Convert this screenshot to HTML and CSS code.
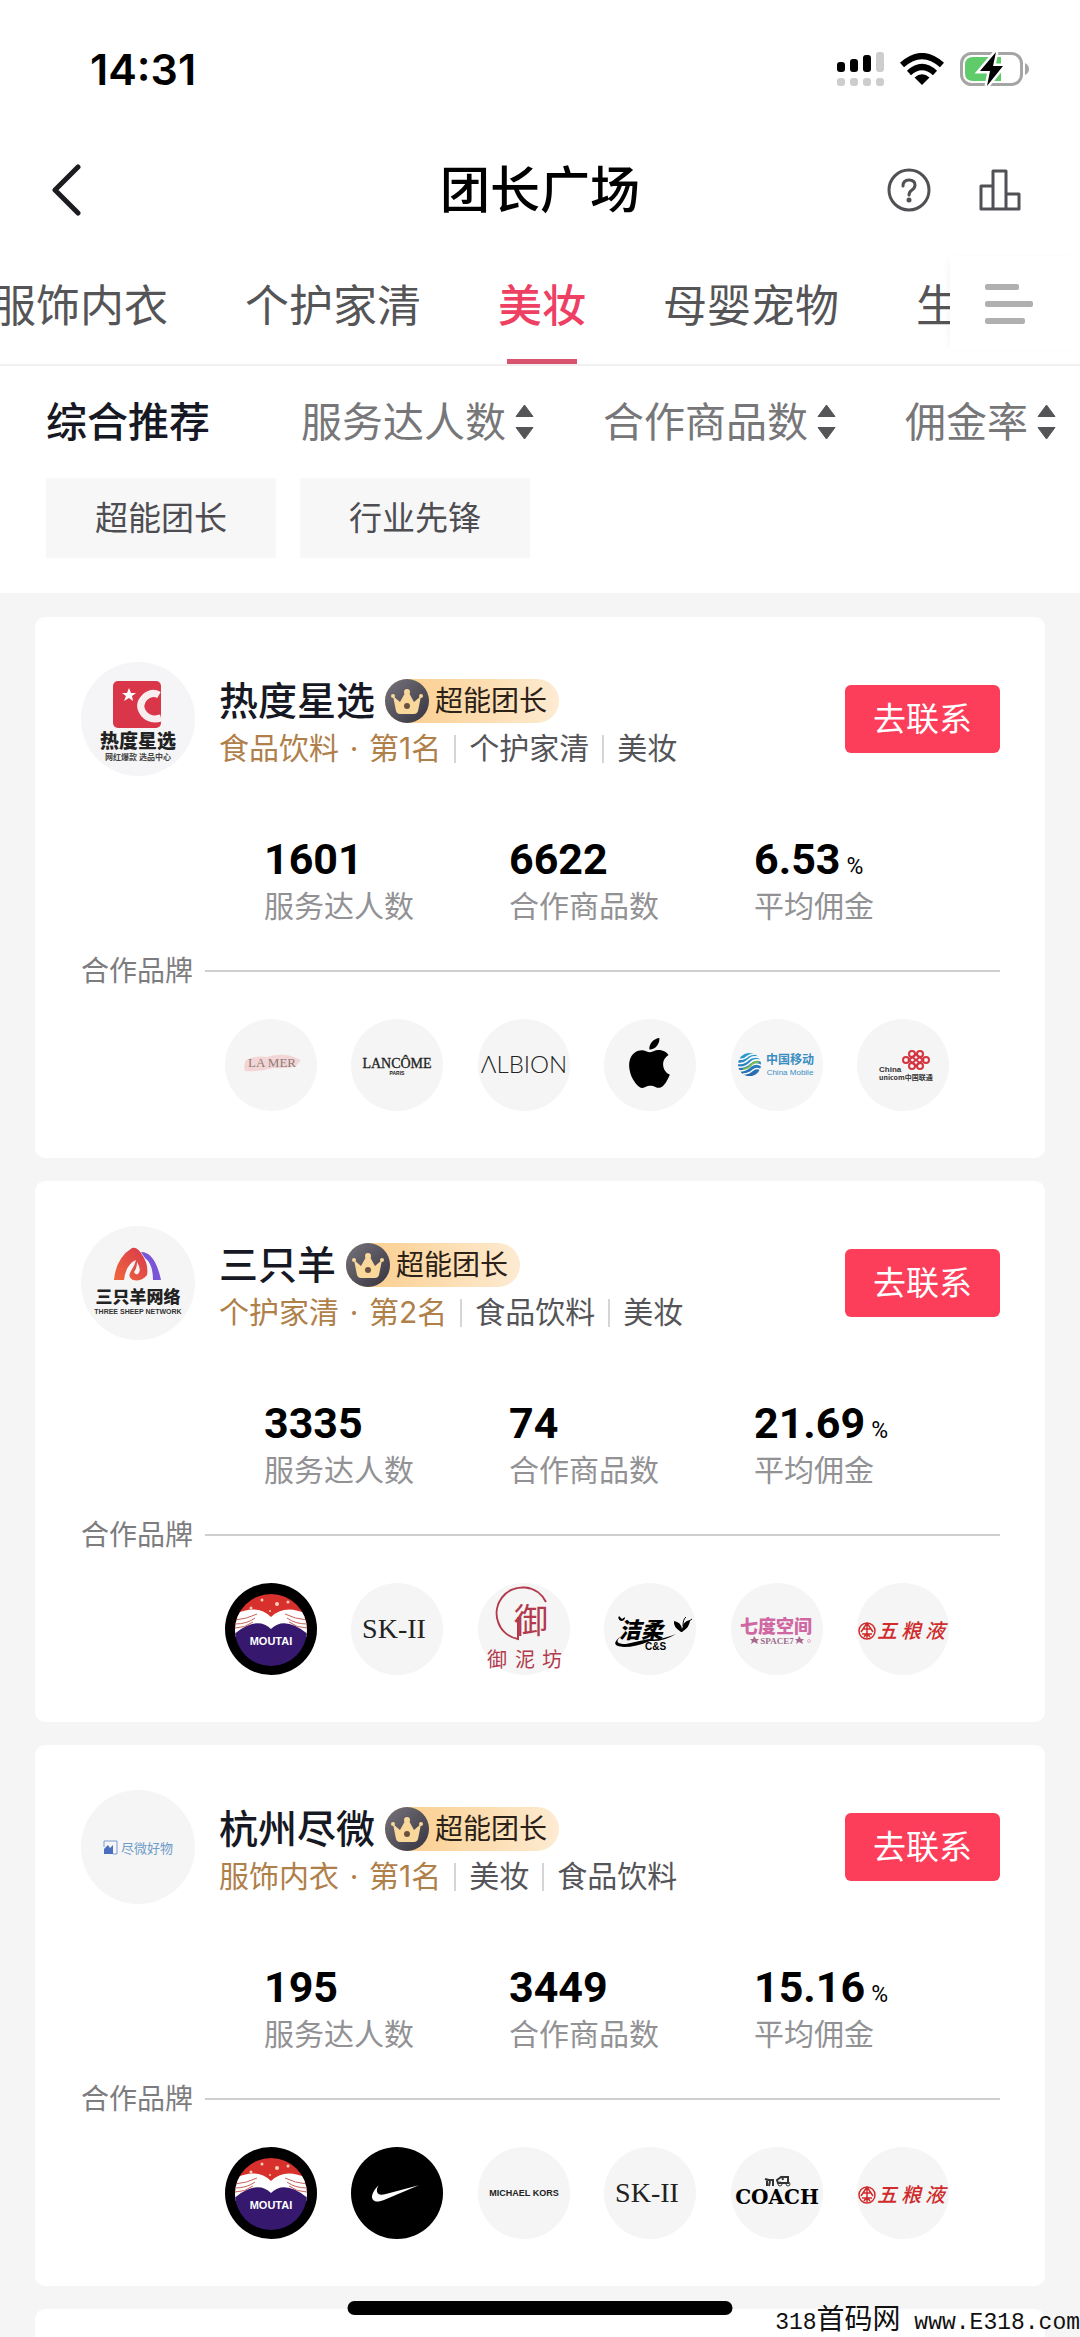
FILE: index.html
```html
<!DOCTYPE html>
<html lang="zh-CN">
  <head>
    <meta charset="utf-8">
    <meta name="viewport" content="width=device-width, initial-scale=1">
    <title>团长广场</title>
    <link rel="stylesheet" href="styles.css">
  </head>
  <body>
    <!-- shared icons and gradients -->
    <svg class="sprite" aria-hidden="true">
      <defs>
        <linearGradient id="crown-bg" x1="0" y1="0" x2="1" y2="1">
          <stop offset="0" stop-color="#77747c"/>
          <stop offset="1" stop-color="#35333f"/>
        </linearGradient>
        <linearGradient id="sheep-left" x1="0" y1="1" x2="1" y2="0">
          <stop offset="0" stop-color="#f0683a"/>
          <stop offset="1" stop-color="#d8384f"/>
        </linearGradient>
        <linearGradient id="mobile-bg" x1="0" y1="0" x2="0" y2="1">
          <stop offset="0" stop-color="#2f9fd0"/>
          <stop offset="1" stop-color="#2565b0"/>
        </linearGradient>
      </defs>
      <symbol id="crown" viewBox="0 0 44 44">
        <circle cx="22" cy="22" r="22" fill="url(#crown-bg)"/>
        <path d="M8 17L15 23L20 14H24L29 23L36 17L33 32Q32 35 29 35H15Q12 35 11 32Z" fill="#fad79b"/>
        <circle cx="8" cy="17" r="2" fill="#fad79b"/>
        <circle cx="22" cy="13" r="3" fill="#fad79b"/>
        <circle cx="36" cy="17" r="2" fill="#fad79b"/>
        <circle cx="22" cy="27" r="3" fill="#6a5240"/>
      </symbol>
      <symbol id="sort" viewBox="0 0 19 34">
        <path d="M9.500 0L18 11.500H1Z M9.500 34L18 22.500H1Z" fill="#555558" stroke="#555558" stroke-linejoin="round"/>
      </symbol>
    </svg>

    <div class="app">
      <div class="statusbar">
        <time class="clock">14:31</time>
        <div class="indicators">
          <svg width="47" height="34" viewBox="0 0 47 34" aria-label="信号">
            <g fill="#000">
              <rect x="0" y="10" width="8" height="10" rx="3"/>
              <rect x="13" y="7" width="8" height="13" rx="3"/>
              <rect x="26" y="3" width="8" height="17" rx="3"/>
            </g>
            <g fill="#cdcdcd">
              <rect x="39" y="0" width="8" height="20" rx="3"/>
              <rect x="0" y="26" width="8" height="8" rx="3"/>
              <rect x="13" y="26" width="8" height="8" rx="3"/>
              <rect x="26" y="26" width="8" height="8" rx="3"/>
              <rect x="39" y="26" width="8" height="8" rx="3"/>
            </g>
          </svg>
          <svg width="44" height="32" viewBox="0 0 44 32" aria-label="无线网络">
            <g fill="none" stroke="#000" stroke-width="6">
              <path d="M2 12Q22 -6 42 12"/>
              <path d="M9 20Q22 8 35 20"/>
            </g>
            <path d="M22 32L14.500 24.500Q22 18 29.500 24.500Z"/>
          </svg>
          <svg width="70" height="36" viewBox="0 0 70 36" aria-label="电池充电中">
            <rect x="1.500" y="2.500" width="60" height="31" rx="10" fill="#fff" stroke="#a5a5a5" stroke-width="3"/>
            <path d="M13 6H41V30H13Q5 30 5 22V14Q5 6 13 6Z" fill="#5fcb6b"/>
            <path d="M65 12Q69 14 69 18Q69 22 65 24Z" fill="#a5a5a5"/>
            <path d="M36 1L20 20H30L27 35L43 15H33Z" stroke="#fff" stroke-width="5"/>
            <path d="M36 1L20 20H30L27 35L43 15H33Z"/>
          </svg>
        </div>
      </div>

      <header class="header">
        <button class="icon-button" aria-label="返回">
          <svg width="30" height="52" viewBox="0 0 30 52"><path d="M27 3L4 26L27 49" fill="none" stroke="#1c1c20" stroke-width="5" stroke-linecap="round" stroke-linejoin="round"/></svg>
        </button>
        <h1>团长广场</h1>
        <div class="actions">
          <button class="icon-button" aria-label="帮助">
            <svg width="44" height="44" viewBox="0 0 44 44" fill="none" stroke="#505055" stroke-width="3">
              <circle cx="22" cy="22" r="20"/>
              <path d="M16 18Q16 12 22 12Q28 12 28 17Q28 20 25 22Q22 24 22 27" stroke-linecap="round"/>
              <circle cx="22" cy="32" r="2.500" fill="#505055" stroke="none"/>
            </svg>
          </button>
          <button class="icon-button" aria-label="数据">
            <svg width="42" height="42" viewBox="0 0 42 42" fill="none" stroke="#505055" stroke-width="3" stroke-linejoin="round">
              <path d="M2 40V17H14V40ZM14 40V2H27V40ZM27 40V25H40V40Z"/>
            </svg>
          </button>
        </div>
      </header>

      <nav class="tabs">
        <div class="tab-scroll">
          <button class="tab">服饰内衣</button>
          <button class="tab">个护家清</button>
          <button class="tab active">美妆</button>
          <button class="tab">母婴宠物</button>
          <button class="tab">生鲜</button>
        </div>
        <button class="tab-menu" aria-label="全部分类">
          <svg width="48" height="40" viewBox="0 0 48 40" fill="#b0b0b0">
            <rect y="0" width="34" height="6" rx="2"/><rect y="17" width="48" height="6" rx="2"/><rect y="34" width="40" height="6" rx="2"/>
          </svg>
        </button>
      </nav>

      <div class="filters">
        <div class="sorts">
          <button class="sort active">综合推荐</button>
          <button class="sort">服务达人数<svg width="19" height="34"><use href="#sort"/></svg></button>
          <button class="sort">合作商品数<svg width="19" height="34"><use href="#sort"/></svg></button>
          <button class="sort">佣金率<svg width="19" height="34"><use href="#sort"/></svg></button>
        </div>
        <div class="chips">
          <button class="chip">超能团长</button>
          <button class="chip">行业先锋</button>
        </div>
      </div>

      <main class="list">
        <article class="card">
          <div class="head">
            <svg class="avatar" viewBox="0 0 114 114" aria-label="热度星选">
              <circle cx="57" cy="57" r="57" fill="#f5f4f6"/>
              <rect x="32" y="19" width="48" height="47" rx="5" fill="#d9364a"/>
              <path d="M48 26L50 31L55 31L51 34L52 39L48 36L43 39L45 34L41 31L46 31Z" fill="#fff"/>
              <path d="M78 33Q71 29 64 35Q56 43 63 52Q69 59 80 56" fill="none" stroke="#f8eef0" stroke-width="7"/>
              <text class="cjk black" x="57" y="86" font-size="19" fill="#222" text-anchor="middle">热度星选</text>
              <text class="cjk bold" x="57" y="98" font-size="8" fill="#444" text-anchor="middle">网红爆款 选品中心</text>
            </svg>
            <div class="info">
              <div class="title">
                <h2>热度星选</h2>
                <span class="badge"><svg width="44" height="44"><use href="#crown"/></svg>超能团长</span>
              </div>
              <div class="tags"><span class="rank">食品饮料<i>·</i>第1名</span><span>个护家清</span><span>美妆</span></div>
            </div>
            <button class="contact">去联系</button>
          </div>
          <dl class="stats">
            <div><dt>服务达人数</dt><dd>1601</dd></div>
            <div><dt>合作商品数</dt><dd>6622</dd></div>
            <div><dt>平均佣金</dt><dd>6.53<small>%</small></dd></div>
          </dl>
          <h3 class="divider">合作品牌</h3>
          <div class="brands">
            <svg viewBox="0 0 92 92">
              <circle cx="46" cy="46" r="46" fill="#f5f5f5"/>
              <path d="M21 41Q30 36 42 38Q55 34 66 37L76 41L71 47Q60 50 48 49Q36 53 20 52Q18 46 21 41Z" fill="#f4d5d6"/>
              <text class="serif" x="47" y="48" font-size="13" fill="#8b7d76" text-anchor="middle">LA MER</text>
            </svg>
            <svg viewBox="0 0 92 92">
              <circle cx="46" cy="46" r="46" fill="#f5f5f5"/>
              <text class="serif" x="46" y="49" font-size="14" fill="#222" stroke="#222" stroke-width=".3" text-anchor="middle">LANCÔME</text>
              <text class="sans bold" x="46" y="56" font-size="5" fill="#222" text-anchor="middle">PARIS</text>
            </svg>
            <svg viewBox="0 0 92 92">
              <circle cx="46" cy="46" r="46" fill="#f5f5f5"/>
              <text class="lato" x="46" y="54" font-size="24" fill="#222" text-anchor="middle">ΛLBION</text>
            </svg>
            <svg viewBox="0 0 92 92">
              <circle cx="46" cy="46" r="46" fill="#f5f5f5"/>
              <path transform="translate(20.500 19) scale(2.080)" d="M12.152 6.896c-.948 0-2.415-1.078-3.960-1.040-2.040.027-3.910 1.183-4.961 3.014-2.117 3.675-.546 9.103 1.519 12.090 1.013 1.454 2.208 3.090 3.792 3.039 1.520-.065 2.090-.987 3.935-.987 1.831 0 2.350.987 3.960.948 1.637-.026 2.676-1.480 3.676-2.948 1.156-1.688 1.636-3.325 1.662-3.415-.039-.013-3.182-1.221-3.220-4.857-.026-3.040 2.480-4.494 2.597-4.559-1.429-2.090-3.623-2.324-4.390-2.376-2-.156-3.675 1.090-4.610 1.090zM15.530 3.830c.843-1.012 1.400-2.427 1.245-3.830-1.207.052-2.662.805-3.532 1.818-.780.896-1.454 2.338-1.273 3.714 1.338.104 2.715-.688 3.559-1.701"/>
            </svg>
            <svg viewBox="0 0 92 92">
              <circle cx="46" cy="46" r="46" fill="#f6f6f7"/>
              <circle cx="18.500" cy="45.500" r="11.500" fill="url(#mobile-bg)"/>
              <g fill="none" stroke="#fff" stroke-width="1.500">
                <path d="M6 44Q12 46 17 41Q22 36 29 39M7 48Q14 49 19 44Q24 39 31 42M8 52Q15 52 20 47Q25 43 31 47M12 55Q18 55 22 51Q26 48 30 51M8 40Q13 41 17 37Q20 35 24 35"/>
              </g>
              <path d="M12 50Q17 50 21 45Q24 42 28 43" fill="none" stroke="#7cc04b" stroke-width="2"/>
              <text class="cjk bold" x="59" y="45" font-size="12" fill="#3c8dbf" text-anchor="middle">中国移动</text>
              <text class="sans" x="59" y="56" font-size="8" fill="#3c8dbf" text-anchor="middle">China Mobile</text>
            </svg>
            <svg viewBox="0 0 92 92">
              <circle cx="46" cy="46" r="46" fill="#f5f5f5"/>
              <g fill="none" stroke="#d3343f" stroke-width="2">
                <circle cx="55" cy="35" r="3"/><circle cx="63" cy="35" r="3"/>
                <circle cx="55" cy="47" r="3"/><circle cx="63" cy="47" r="3"/>
                <circle cx="49" cy="41" r="3"/><circle cx="69" cy="41" r="3"/>
                <path d="M52 41L59 35L66 41L59 47ZM55 38L63 44M63 38L55 44"/>
              </g>
              <text class="sans bold" x="22" y="53" font-size="8" fill="#333">China</text>
              <text class="cjk bold" x="22" y="61" font-size="7" fill="#333">unicom中国联通</text>
            </svg>
          </div>
        </article>

        <article class="card">
          <div class="head">
            <svg class="avatar" viewBox="0 0 114 114" aria-label="三只羊网络">
              <circle cx="57" cy="57" r="57" fill="#f5f5f5"/>
              <path d="M60 26Q74 26 80 54H72Q72 38 64 32Z" fill="#7a55d8"/>
              <path d="M33 54Q35 32 51 22Q56 21 60 27Q68 38 66 49Q61 56 52 54Q46 51 50 45Q54 39 55 34Q45 38 43 54Z" fill="url(#sheep-left)"/>
              <path d="M56 36Q61 44 57 48Q54 49 53 46Q56 42 56 36Z" fill="#f5f5f5"/>
              <text class="cjk black" x="57" y="77" font-size="17" fill="#222" text-anchor="middle">三只羊网络</text>
              <text class="sans bold" x="57" y="88" font-size="7" fill="#333" text-anchor="middle">THREE SHEEP NETWORK</text>
            </svg>
            <div class="info">
              <div class="title">
                <h2>三只羊</h2>
                <span class="badge"><svg width="44" height="44"><use href="#crown"/></svg>超能团长</span>
              </div>
              <div class="tags"><span class="rank">个护家清<i>·</i>第2名</span><span>食品饮料</span><span>美妆</span></div>
            </div>
            <button class="contact">去联系</button>
          </div>
          <dl class="stats">
            <div><dt>服务达人数</dt><dd>3335</dd></div>
            <div><dt>合作商品数</dt><dd>74</dd></div>
            <div><dt>平均佣金</dt><dd>21.69<small>%</small></dd></div>
          </dl>
          <h3 class="divider">合作品牌</h3>
          <div class="brands">
            <svg viewBox="0 0 92 92">
              <g id="moutai">
                <circle cx="46" cy="46" r="46"/>
                <clipPath id="moutai-clip"><circle cx="46" cy="47" r="36"/></clipPath>
                <g clip-path="url(#moutai-clip)">
                  <path d="M0 0H92V50H0Z" fill="#d8302c"/>
                  <path d="M8 32Q32 20 46 34Q60 20 84 32V54H8Z" fill="#fff"/>
                  <path d="M8 52Q32 32 46 46Q60 32 84 52V92H8Z" fill="#36186f"/>
                  <g fill="none" stroke="#c8605a" stroke-width="1">
                    <path d="M10 37Q22 36 32 31M10 41Q22 41 30 35M10 45Q20 45 28 39M82 37Q70 36 60 31M82 41Q70 41 62 35M82 45Q72 45 64 39"/>
                  </g>
                  <g fill="#fbd0b8">
                    <circle cx="26" cy="25" r="1.500"/><circle cx="37" cy="17" r="1.500"/><circle cx="52" cy="21" r="2"/><circle cx="63" cy="19" r="1.500"/><circle cx="45" cy="28" r="1"/>
                  </g>
                </g>
                <text class="sans bold" x="46" y="62" font-size="11" fill="#fff" text-anchor="middle">MOUTAI</text>
              </g>
            </svg>
            <svg viewBox="0 0 92 92">
              <g id="sk2">
                <circle cx="46" cy="46" r="46" fill="#f5f5f5"/>
                <text class="serif" x="43" y="55" font-size="28" fill="#222" text-anchor="middle">SK-II</text>
              </g>
            </svg>
            <svg viewBox="0 0 92 92">
              <circle cx="46" cy="46" r="46" fill="#f6f5f5"/>
              <path d="M68 19A26 26 0 1 0 40 56V34" fill="none" stroke="#b23a4c" stroke-width="2"/>
              <g class="cjk" fill="#b23a4c">
                <text x="36" y="50" font-size="34">御</text>
                <text x="9" y="84" font-size="20">御</text><text x="37" y="84" font-size="20">泥</text><text x="64" y="84" font-size="20">坊</text>
              </g>
            </svg>
            <svg viewBox="0 0 92 92">
              <circle cx="46" cy="46" r="46" fill="#f5f5f5"/>
              <text class="cjk black" x="15" y="55" font-size="22" font-style="italic">洁柔</text>
              <path d="M17 53Q8 61 22 61Q35 58 45 56Q55 58 72 51Q59 59 46 58Q32 64 20 64Q4 63 17 53Z"/>
              <path d="M77 49Q69 44 70 38Q77 39 78 46Q79 38 86 37Q86 44 78 49ZM17 38Q13 36 15 33L18 36L21 34Q21 38 17 38Z"/>
              <path d="M79 43Q79 36 82 34M80 42L88 36" fill="none" stroke="#000"/>
              <text class="sans bold" x="41" y="67" font-size="10">C&amp;S</text>
            </svg>
            <svg viewBox="0 0 92 92">
              <circle cx="46" cy="46" r="46" fill="#f5f5f6"/>
              <text class="cjk black" x="45" y="50" font-size="18" fill="#cf68a2" text-anchor="middle">七度空间</text>
              <text class="serif bold" x="46" y="61" font-size="9" fill="#9d6c88" text-anchor="middle">SPACE7</text>
              <path d="M23 53L25 56L28 56L26 58L27 61L23 59L20 61L21 58L19 56L22 56ZM68 53L70 56L73 56L71 58L72 61L68 59L65 61L66 58L64 56L67 56Z" fill="#a9688d"/>
              <circle cx="78" cy="58" r="1.500" fill="none" stroke="#cf68a2" stroke-width=".5"/>
            </svg>
            <svg viewBox="0 0 92 92">
              <g id="wuliangye">
                <circle cx="46" cy="46" r="46" fill="#f6f5f5"/>
                <g fill="none" stroke="#cf2b2b" stroke-width="1.500">
                  <circle cx="10" cy="48" r="8"/>
                  <path d="M10 40L4 49M10 40L16 49M10 42V55M6 46H14M5 51H15M7 54L10 50L13 54"/>
                </g>
                <g class="cjk" font-size="20" font-style="italic" font-weight="500" fill="#cf2b2b">
                  <text x="20" y="55">五</text><text x="44" y="55">粮</text><text x="68" y="55">液</text>
                </g>
              </g>
            </svg>
          </div>
        </article>

        <article class="card">
          <div class="head">
            <svg class="avatar" viewBox="0 0 114 114" aria-label="尽微好物">
              <circle cx="57" cy="57" r="57" fill="#f5f5f5"/>
              <path d="M23 57V51H36V64H32" fill="none" stroke="#7c9bd0"/>
              <path d="M23 59L27 55L29 58L32 55V64H23Z" fill="#4a6fc0"/>
              <text class="cjk" x="40" y="63" font-size="13" fill="#6d9cc8">尽微好物</text>
            </svg>
            <div class="info">
              <div class="title">
                <h2>杭州尽微</h2>
                <span class="badge"><svg width="44" height="44"><use href="#crown"/></svg>超能团长</span>
              </div>
              <div class="tags"><span class="rank">服饰内衣<i>·</i>第1名</span><span>美妆</span><span>食品饮料</span></div>
            </div>
            <button class="contact">去联系</button>
          </div>
          <dl class="stats">
            <div><dt>服务达人数</dt><dd>195</dd></div>
            <div><dt>合作商品数</dt><dd>3449</dd></div>
            <div><dt>平均佣金</dt><dd>15.16<small>%</small></dd></div>
          </dl>
          <h3 class="divider">合作品牌</h3>
          <div class="brands">
            <svg viewBox="0 0 92 92"><use href="#moutai"/></svg>
            <svg viewBox="0 0 92 92">
              <circle cx="46" cy="46" r="46"/>
              <path transform="translate(21 23) scale(1.950)" fill="#fff" d="M24 7.800L6.442 15.276c-1.456.616-2.679.925-3.668.925-1.120 0-1.933-.392-2.437-1.177-.317-.504-.410-1.143-.280-1.918.130-.775.476-1.600 1.036-2.478.467-.710 1.232-1.643 2.297-2.800a6.122 6.122 0 00-.784 1.848c-.280 1.195-.028 2.072.756 2.632.373.261.886.392 1.540.392.522 0 1.110-.084 1.764-.252L24 7.800z"/>
            </svg>
            <svg viewBox="0 0 92 92">
              <circle cx="46" cy="46" r="46" fill="#f5f5f5"/>
              <text class="sans bold" x="46" y="49" font-size="9" fill="#222" text-anchor="middle">MICHAEL KORS</text>
            </svg>
            <svg viewBox="0 0 92 92"><use href="#sk2"/></svg>
            <svg viewBox="0 0 92 92">
              <circle cx="46" cy="46" r="46" fill="#f5f5f5"/>
              <g fill="none" stroke="#333" stroke-width="2">
                <path d="M34 32L38 33H43M36 33V39M42 33V39M39 34L38 39M46 33L50 30H57V36H47ZM51 29L52 33"/>
                <circle cx="49" cy="37" r="2" stroke-width="1"/><circle cx="57" cy="37" r="2" stroke-width="1"/>
              </g>
              <text class="dejavu bold" x="46" y="57" font-size="20" text-anchor="middle">COACH</text>
            </svg>
            <svg viewBox="0 0 92 92"><use href="#wuliangye"/></svg>
          </div>
        </article>

        <article class="card"></article>
      </main>

      <div class="home-bar"></div>
      <div class="watermark">318<span>首码网</span> www.E318.com</div>
    </div>
  </body>
</html>
```
FILE: styles.css
```css
* {
  box-sizing: border-box;
}
body {
  margin: 0;
  font-family: Inter, 'Noto Sans CJK SC', sans-serif;
  color: #161823;
  background: #fff;
}
h1,
h2,
h3,
dl,
dd {
  margin: 0;
}
button {
  border: 0;
  padding: 0;
  background: none;
  font: inherit;
  color: inherit;
  white-space: nowrap;
  cursor: pointer;
}
svg {
  display: block;
  flex: none;
}
.sprite {
  position: absolute;
  width: 0;
  height: 0;
}
.app {
  position: relative;
  height: 100vh;
  overflow: hidden;
  display: flex;
  flex-direction: column;
}

/* logo lettering */
.cjk {
  font-family: 'Noto Sans CJK SC', sans-serif;
}
.sans {
  font-family: 'Liberation Sans', sans-serif;
}
.serif {
  font-family: 'Liberation Serif', serif;
}
.dejavu {
  font-family: 'DejaVu Serif', serif;
}
.lato {
  font-family: Lato, sans-serif;
  font-weight: 300;
}
.bold {
  font-weight: 700;
}
.black {
  font-weight: 900;
}

/* top bars */
.statusbar {
  flex: none;
  display: flex;
  align-items: center;
  justify-content: space-between;
  height: 138px;
  padding: 0 50px 0 90px;
}
.clock {
  font-size: 43px;
  line-height: 50px;
  font-weight: 600;
  color: #000;
}
.indicators {
  display: flex;
  align-items: center;
  gap: 16px;
}
.header {
  flex: none;
  display: grid;
  grid-template-columns: 1fr auto 1fr;
  align-items: center;
  height: 104px;
  padding: 0 51px;
}
.header h1 {
  font-size: 50px;
  line-height: 64px;
  font-weight: 500;
  color: #000;
}
.icon-button {
  justify-self: start;
}
.actions {
  display: flex;
  justify-content: flex-end;
  align-items: center;
  gap: 48px;
  padding-right: 8px;
}
.tabs {
  flex: none;
  display: flex;
  height: 124px;
  border-bottom: 2px solid #f0f0f1;
}
.tab-scroll {
  flex: 1;
  min-width: 0;
  display: flex;
  gap: 77px;
  overflow: hidden;
  /* list is scrolled a little to the left */
  margin-left: -8px;
}
.tab {
  flex: none;
  display: flex;
  flex-direction: column;
  align-items: center;
  justify-content: space-between;
  padding-top: 32px;
  font-size: 44px;
  line-height: 64px;
  color: #555558;
}
.tab::after {
  content: '';
  width: 70px;
  height: 5px;
}
.tab.active {
  font-weight: 500;
  color: #ee4063;
}
.tab.active::after {
  background: #d9536f;
}
.tab-menu {
  flex: none;
  width: 130px;
  margin: 14px 0;
  padding: 2px 0 0 35px;
  background: #fff;
  box-shadow: -4px 0 8px -4px rgba(0, 0, 0, 0.06);
}

/* filters */
.filters {
  flex: none;
  padding: 0 24px 35px 46px;
}
.sorts {
  display: flex;
  justify-content: space-between;
  align-items: center;
  height: 112px;
}
.sort {
  display: flex;
  align-items: center;
  gap: 9px;
  font-size: 41px;
  line-height: 56px;
  color: #77777a;
}
.sort.active {
  padding-right: 22px;
  font-weight: 500;
  color: #161823;
}
.chips {
  display: flex;
  gap: 24px;
}
.chip {
  width: 230px;
  height: 80px;
  background: #f7f7f8;
  font-size: 33px;
  line-height: 44px;
  color: #4d4d52;
}

/* leader list */
.list {
  flex: 1;
  display: flex;
  flex-direction: column;
  gap: 23px;
  padding: 24px 35px 0;
  background: #f5f5f5;
}
.card {
  flex: none;
  min-height: 541px;
  padding: 45px 45px 47px 46px;
  border-radius: 10px;
  background: #fff;
}
.head {
  display: flex;
  align-items: center;
  gap: 24px;
}
.avatar {
  width: 114px;
  height: 114px;
}
.info {
  flex: 1;
  padding-top: 10px;
}
.title {
  display: flex;
  align-items: center;
  gap: 10px;
}
.title h2 {
  font-size: 39px;
  line-height: 48px;
  font-weight: 500;
}
.badge {
  display: flex;
  align-items: center;
  gap: 6px;
  height: 44px;
  padding-right: 12px;
  border-radius: 22px;
  background: linear-gradient(90deg, #fbcb86, #fdebd2);
  font-size: 28px;
  line-height: 44px;
  color: #2b2118;
}
.tags {
  display: flex;
  align-items: center;
  font-size: 30px;
  line-height: 46px;
  color: #555559;
}
.tags span + span::before {
  content: '';
  display: inline-block;
  width: 2px;
  height: 28px;
  margin: 0 13px;
  background: #d5d5d8;
  vertical-align: -4px;
}
.tags .rank {
  color: #b0804a;
}
.tags i {
  display: inline-block;
  width: 30px;
  text-align: center;
  font-style: normal;
}
.contact {
  width: 155px;
  height: 68px;
  border-radius: 6px;
  background: #fc3e5b;
  font-size: 33px;
  line-height: 44px;
  color: #fff;
}
.stats {
  display: flex;
  margin-top: 58px;
  padding-left: 183px;
}
.stats div {
  display: flex;
  flex-direction: column-reverse;
  width: 245px;
}
.stats dt {
  font-size: 30px;
  line-height: 44px;
  color: #929295;
}
.stats dd {
  font: 700 43px/50px Roboto, sans-serif;
  color: #000;
}
.stats small {
  margin-left: 6px;
  font-size: 23px;
  line-height: 24px;
  font-weight: 400;
}
.divider {
  display: flex;
  align-items: center;
  gap: 12px;
  margin-top: 23px;
  font-size: 28px;
  line-height: 40px;
  font-weight: 400;
  color: #7d7d80;
}
.divider::after {
  content: '';
  flex: 1;
  height: 2px;
  background: #cfcfd1;
}
.brands {
  display: flex;
  justify-content: space-between;
  margin-top: 28px;
  padding: 0 51px 0 144px;
}
.brands > svg {
  width: 92px;
  height: 92px;
}

/* overlays */
.home-bar {
  position: absolute;
  left: 50%;
  bottom: 22px;
  width: 385px;
  height: 14px;
  border-radius: 7px;
  background: #000;
  transform: translateX(-50%);
}
.watermark {
  position: absolute;
  right: 0;
  bottom: 0;
  font: 23px/28px 'Liberation Mono', monospace;
  color: #111;
}
.watermark span {
  font: 28px/28px 'Noto Sans CJK SC', sans-serif;
}
```
